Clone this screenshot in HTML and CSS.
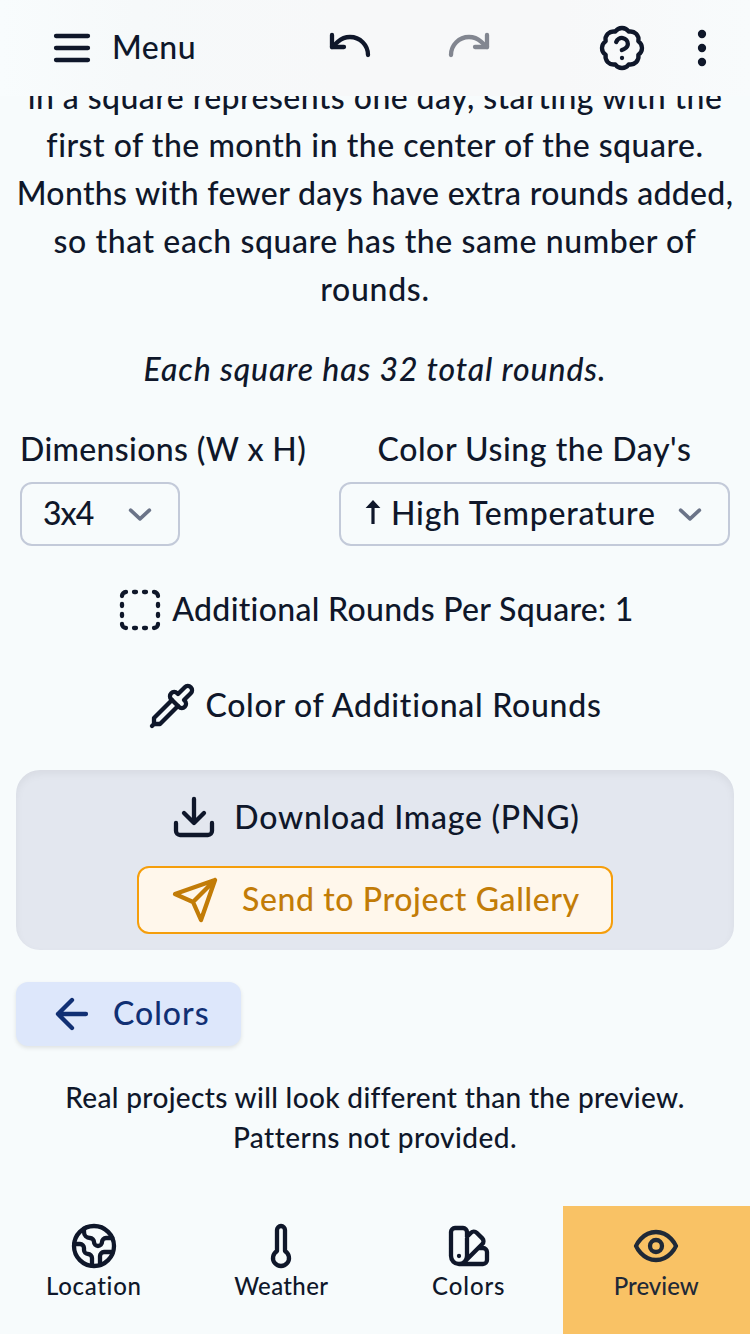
FILE: index.html
```html
<!DOCTYPE html>
<html lang="en">
<head>
<meta charset="utf-8">
<title>Preview</title>
<link rel="stylesheet" href="styles.css">
</head>
<body>
<div class="app">
  <header class="topbar">
    <button class="menu-btn">
      <svg class="icon" viewBox="0 0 24 24"><path d="M4 6h16M4 12h16M4 18h16"/></svg>
      <span class="menu-label">Menu</span>
    </button>
    <div class="history">
      <svg class="icon" viewBox="0 0 24 24"><path d="M3 7v6h6"/><path d="M21 17a9 9 0 0 0-9-9 9 9 0 0 0-6 2.3L3 13"/></svg>
      <svg class="icon icon-disabled" viewBox="0 0 24 24"><path d="M21 7v6h-6"/><path d="M3 17a9 9 0 0 1 9-9 9 9 0 0 1 6 2.3l3 2.7"/></svg>
    </div>
    <div class="actions">
      <svg class="icon" viewBox="0 0 24 24"><path d="M3.85 8.62a4 4 0 0 1 4.78-4.77 4 4 0 0 1 6.74 0 4 4 0 0 1 4.78 4.78 4 4 0 0 1 0 6.74 4 4 0 0 1-4.77 4.78 4 4 0 0 1-6.75 0 4 4 0 0 1-4.78-4.77 4 4 0 0 1 0-6.76Z"/><path d="M9.09 9a3 3 0 0 1 5.83 1c0 2-3 3-3 3M12 17h.01"/></svg>
      <svg class="icon" viewBox="0 0 24 24"><circle cx="12" cy="5" r="1"/><circle cx="12" cy="12" r="1"/><circle cx="12" cy="19" r="1"/></svg>
    </div>
  </header>

  <main class="content">
    <p class="intro"><span class="l1">in a square represents one day, starting with the</span><br><span class="l2">first of the month in the center of the square.</span><br><span class="l3">Months with fewer days have extra rounds added,</span><br><span class="l4">so that each square has the same number of</span><br><span class="l5">rounds.</span></p>
    <p class="note">Each square has 32 total rounds.</p>

    <div class="fields">
      <div class="field">
        <span class="field-label dims-label">Dimensions (W x H)</span>
        <div class="select select-dims">
          <span class="dims-value">3x4</span>
          <svg class="chevron" viewBox="0 0 24 24"><path d="M2.6 8.2l9.4 8.600 9.400-8.600"/></svg>
        </div>
      </div>
      <div class="field field-color">
        <span class="field-label day-label">Color Using the Day's</span>
        <div class="select select-color">
          <svg class="up" viewBox="0 0 16 24"><path d="M6.4 24V8H.6L8 0l7.400 8H9.600V24z"/></svg>
          <span class="temp-value">High Temperature</span>
          <svg class="chevron" viewBox="0 0 24 24"><path d="M2.6 8.2l9.4 8.600 9.400-8.600"/></svg>
        </div>
      </div>
    </div>

    <div class="option option-rounds">
      <svg class="icon" viewBox="0 0 24 24"><path d="M5 3a2 2 0 0 0-2 2M19 3a2 2 0 0 1 2 2M21 19a2 2 0 0 1-2 2M5 21a2 2 0 0 1-2-2M9 3h1M9 21h1M14 3h1M14 21h1M3 9v1M21 9v1M3 14v1M21 14v1"/></svg>
      <span class="rounds-label">Additional Rounds Per Square: 1</span>
    </div>
    <div class="option option-color">
      <svg class="icon" viewBox="0 0 24 24"><path d="m2 22 1-1h3l9-9M3 21v-3l9-9"/><path d="m15 6 3.4-3.4a2.1 2.1 0 1 1 3 3L18 9l.4.4a2.1 2.1 0 1 1-3 3l-3.800-3.800a2.100 2.100 0 1 1 3-3l.4.4Z"/></svg>
      <span class="rounds-color-label">Color of Additional Rounds</span>
    </div>

    <section class="panel">
      <button class="download">
        <svg class="icon" viewBox="0 0 24 24"><path d="M21 15v4a2 2 0 0 1-2 2H5a2 2 0 0 1-2-2v-4M7 10l5 5 5-5M12 15V3"/></svg>
        <span class="download-label">Download Image (PNG)</span>
      </button>
      <button class="send">
        <svg class="icon" viewBox="0 0 24 24"><path d="m22 2-7 20-4-9-9-4ZM22 2 11 13"/></svg>
        <span class="send-label">Send to Project Gallery</span>
      </button>
    </section>

    <button class="back">
      <svg class="icon" viewBox="0 0 24 24"><path d="M19 12H5M12 19l-7-7 7-7"/></svg>
      <span class="back-label">Colors</span>
    </button>

    <p class="disclaimer"><span class="d1">Real projects will look different than the preview.</span><br><span class="d2">Patterns not provided.</span></p>
  </main>

  <nav class="tabs">
    <a class="tab">
      <svg class="icon" viewBox="0 0 24 24"><path d="M21.540 15H17a2 2 0 0 0-2 2v4.540M7 3.340V5a3 3 0 0 0 3 3 2 2 0 0 1 2 2c0 1.100.9 2 2 2a2 2 0 0 0 2-2c0-1.100.9-2 2-2h3.170M11 21.950V18a2 2 0 0 0-2-2 2 2 0 0 1-2-2v-1a2 2 0 0 0-2-2H2.050"/><circle cx="12" cy="12" r="10"/></svg>
      <span class="t1">Location</span>
    </a>
    <a class="tab">
      <svg class="icon" viewBox="0 0 24 24"><path d="M14 4v10.540a4 4 0 1 1-4 0V4a2 2 0 0 1 4 0Z"/></svg>
      <span class="t2">Weather</span>
    </a>
    <a class="tab">
      <svg class="icon" viewBox="0 0 24 24"><path d="M5 3h4a2 2 0 0 1 2 2v12a4 4 0 0 1-8 0V5a2 2 0 0 1 2-2M11 7.350l2-2a2 2 0 0 1 2.828 0l2.828 2.828a2 2 0 0 1 0 2.828l-9 9M16.700 13H19a2 2 0 0 1 2 2v4a2 2 0 0 1-2 2H7M7 17v.01"/></svg>
      <span class="t3">Colors</span>
    </a>
    <a class="tab tab-active">
      <svg class="icon" viewBox="0 0 24 24"><path d="M2 12s3-7 10-7 10 7 10 7-3 7-10 7-10-7-10-7Z"/><circle cx="12" cy="12" r="3"/></svg>
      <span class="t4">Preview</span>
    </a>
  </nav>
</div>
</body>
</html>
```

FILE: styles.css
```css
* { box-sizing: border-box; }
body {
  margin: 0;
  background: #f7fbfc;
  color: #0f172a;
  font: 500 32px/48px "Lato", "Open Sans", sans-serif;
}
p { margin: 0; }
button {
  font: inherit;
  color: inherit;
  background: none;
  border: 0;
  padding: 0;
  margin: 0;
}
span { white-space: nowrap; }
.app {
  width: 750px;
  height: 1334px;
  display: flex;
  flex-direction: column;
  overflow: hidden;
}
.icon {
  width: 48px;
  height: 48px;
  flex: none;
  display: block;
  fill: none;
  stroke: currentColor;
  stroke-width: 2.15;
  stroke-linecap: round;
  stroke-linejoin: round;
}

/* Top bar */
.topbar {
  height: 96px;
  flex: none;
  display: flex;
  align-items: center;
  padding: 0 24px 0 48px;
  background: linear-gradient(90deg, #f8fcfd, #f6f9fa 18%, #f7f8f9 45%, #f7f8f9 75%, #f8fbfc);
}
.menu-btn {
  width: 278px;
  display: flex;
  align-items: center;
  gap: 16px;
}
.menu-label { letter-spacing: 0.5px; padding-bottom: 3px; }
.history {
  display: flex;
  gap: 71px;
  padding-bottom: 6px;
}
.icon-disabled { opacity: 0.5; }
.actions {
  margin-left: auto;
  display: flex;
  gap: 32px;
}

/* Scrolled page content */
.content {
  flex: 1;
  min-height: 0;
  overflow: hidden;
  padding: 0 16px;
}
.intro { margin-top: -23px; text-align: center; }
.l1 { letter-spacing: 0.44px; }
.l2 { letter-spacing: 0.51px; }
.l3 { letter-spacing: 0.33px; }
.l4 { letter-spacing: 0.58px; }
.l5 { letter-spacing: 0.7px; }
.note {
  margin-top: 32px;
  text-align: center;
  font-style: italic;
  letter-spacing: 0.9px;
}

.fields {
  display: flex;
  justify-content: space-between;
  margin-top: 32px;
  padding: 0 4px;
}
.field { display: flex; flex-direction: column; gap: 9px; }
.field-color { align-items: center; }
.dims-label { letter-spacing: 0.35px; }
.day-label { letter-spacing: 0.55px; }
.select {
  height: 64px;
  display: flex;
  align-items: center;
  border: 2px solid #c3cad9;
  border-radius: 12px;
}
.select span { padding-bottom: 2px; }
.select-dims { width: 160px; padding: 0 26px 0 21px; justify-content: space-between; }
.select-color { width: 391px; padding: 0 26px 0 24px; }
.select-color .chevron { margin-left: auto; }
.dims-value { letter-spacing: -1px; }
.temp-value { letter-spacing: 0.8px; margin-left: 10px; }
.up { width: 16px; height: 24px; fill: #0f172a; margin-bottom: 4px; }
.chevron {
  width: 24px;
  height: 24px;
  fill: none;
  stroke: #6b7488;
  stroke-width: 3.6;
  stroke-linecap: round;
  stroke-linejoin: round;
}

.option { display: flex; align-items: center; justify-content: center; gap: 8px; height: 48px; }
.option .icon { margin-top: 4px; }
.option span { padding-top: 2px; }
.option-rounds { margin-top: 38px; }
.option-color { margin-top: 48px; gap: 9px; }
.rounds-label { letter-spacing: 0.3px; }
.rounds-color-label { letter-spacing: 0.73px; }

.panel {
  height: 180px;
  margin-top: 42px;
  padding: 20px 0 16px;
  display: flex;
  flex-direction: column;
  align-items: center;
  justify-content: space-between;
  border-radius: 24px;
  background: #e3e7ef;
  box-shadow: inset 0 4px 8px rgba(0, 0, 0, 0.05);
}
.download, .send { display: flex; align-items: center; }
.download { gap: 16px; height: 52px; padding: 0 0 2px 0; }
.download .icon { margin-top: 4px; }
.download-label { letter-spacing: 0.75px; padding-top: 3px; }
.send {
  width: 476px;
  height: 68px;
  padding: 0 32px;
  gap: 23px;
  color: #c27c07;
  background: #fff7eb;
  border: 2px solid #f59e0b;
  border-radius: 12px;
}
.send-label { letter-spacing: 0.6px; padding-bottom: 2px; }

.back {
  width: 225px;
  height: 64px;
  margin-top: 32px;
  padding-left: 32px;
  display: flex;
  align-items: center;
  gap: 17px;
  color: #113074;
  background: #dde7fb;
  border-radius: 12px;
  box-shadow: 0 2px 4px rgba(0, 0, 0, 0.1);
}
.back-label { letter-spacing: 1px; padding-bottom: 2px; }

.disclaimer { margin-top: 31px; text-align: center; font-size: 28px; line-height: 40px; }
.d1 { letter-spacing: 0.34px; }
.d2 { letter-spacing: 0.45px; }

/* Bottom navigation */
.tabs { display: grid; grid-template-columns: repeat(4, 1fr); height: 128px; flex: none; }
.tab {
  display: flex;
  flex-direction: column;
  align-items: center;
  padding-top: 16px;
  font-size: 24px;
  line-height: 32px;
}
.tab-active { background: #f9c265; color: #1f2937; }
.t1 { letter-spacing: 0.7px; }
.t2 { letter-spacing: 0.35px; }
.t3 { letter-spacing: 0.9px; }
.t4 { letter-spacing: 0; }
```
